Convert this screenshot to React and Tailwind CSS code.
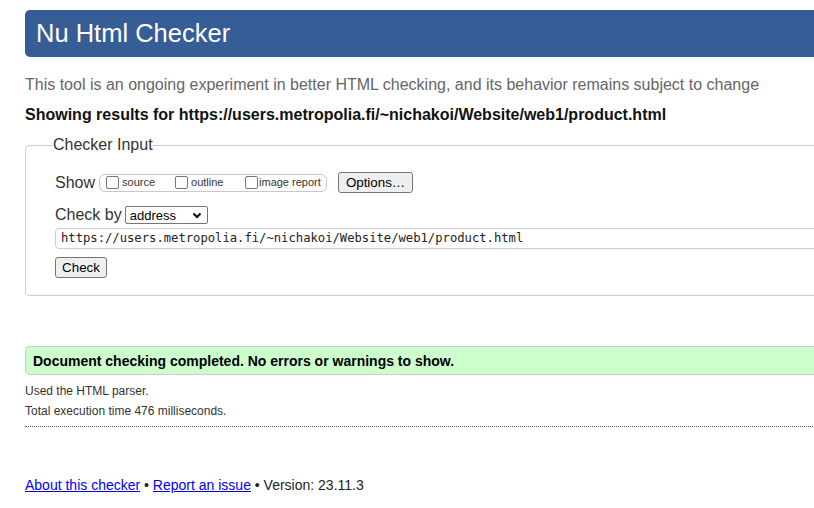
import React from 'react';

const checkBox = "appearance-none w-[13px] h-[13px] m-0 shrink-0 border border-[#767676] rounded-[2px] bg-white";
const greyButton = "flex items-center justify-center bg-[#efefef] border border-[#767676] rounded-[3px] text-[13.33px] text-black leading-none";

export default function App() {
    return (
        <div className="w-[814px] h-[508px] overflow-hidden bg-white font-['Liberation_Sans',Arial,sans-serif] text-[#222]">
            <div className="ml-[25px] w-[900px]">
                <header className="mt-[10px] h-[47px] flex items-center pl-[11px] bg-[#365d95] rounded-l-[5px]">
                    <h1 className="text-[25.5px] leading-none text-white">Nu Html Checker</h1>
                </header>

                <p className="mt-[19px] text-[16px] leading-[18px] text-[#666]">
                    This tool is an ongoing experiment in better HTML checking, and its behavior remains subject to change
                </p>
                <p className="mt-[12px] text-[16px] leading-[18px] font-bold text-[#111]">
                    Showing results for https://users.metropolia.fi/~nichakoi/Website/web1/product.html
                </p>

                <fieldset className="mt-[12px] border border-[#ccc] rounded-[4px] pl-[29px] pr-0 pb-[17px]">
                    <legend className="-ml-[2px] px-0 text-[16px] leading-[18px] text-[#333]">Checker Input</legend>

                    <div className="mt-[18px] h-[21px] flex items-center">
                        <span className="text-[16px] leading-none text-[#333]">Show</span>
                        <div className="ml-[4px] w-[228px] h-[18px] flex items-center border border-[#c8c8c8] rounded-[6px] text-[11px] text-[#333]">
                            <label className="w-[72px] flex items-center">
                                <input type="checkbox" className={`${checkBox} ml-[6px]`} />
                                <span className="ml-[3px]">source</span>
                            </label>
                            <label className="w-[70px] flex items-center">
                                <input type="checkbox" className={`${checkBox} ml-[3px]`} />
                                <span className="ml-[3px]">outline</span>
                            </label>
                            <label className="flex items-center">
                                <input type="checkbox" className={`${checkBox} ml-[3px]`} />
                                <span className="ml-[1px]">image report</span>
                            </label>
                        </div>
                        <button className={`${greyButton} ml-[11px] w-[75px] h-[21px]`}>Options…</button>
                    </div>

                    <div className="mt-[13px] h-[18px] flex items-center">
                        <span className="text-[16px] leading-none text-[#333]">Check by</span>
                        <div className="ml-[3px] w-[83px] h-[18px] flex items-center justify-between border border-[#767676] rounded-[2px] pl-[4px] pr-[4px] text-[13px] text-black">
                            <span className="leading-none">address</span>
                            <svg width="10" height="7" viewBox="0 0 10 7" className="mr-[1px]">
                                <path d="M1.5 1.5 L5 5 L8.5 1.5" fill="none" stroke="#000" strokeWidth="2" />
                            </svg>
                        </div>
                    </div>

                    <div className="mt-[4px] h-[21px] flex items-center border border-[#ccc] rounded-[4px] pl-[5px] font-['DejaVu_Sans_Mono',monospace] text-[12.2px] text-[#222]">
                        https://users.metropolia.fi/~nichakoi/Website/web1/product.html
                    </div>

                    <button className={`${greyButton} mt-[8px] w-[52px] h-[21px]`}>Check</button>
                </fieldset>

                <div className="mt-[50px] h-[29px] flex items-center pl-[7px] bg-[#ccffcc] border border-[#ccc] rounded-l-[4px]">
                    <p className="text-[14px] font-bold text-black leading-none">
                        Document checking completed. No errors or warnings to show.
                    </p>
                </div>

                <p className="mt-[9px] text-[12px] leading-[14px] text-[#333]">Used the HTML parser.</p>
                <p className="mt-[6px] text-[12px] leading-[14px] text-[#333]">Total execution time 476 milliseconds.</p>
                <div className="mt-[8px] border-t border-dotted border-[#555]" />

                <p className="mt-[50px] text-[14px] leading-[16px] text-[#222]">
                    <a href="#" className="text-[#0000ee] underline">About this checker</a>
                    {' • '}
                    <a href="#" className="text-[#0000ee] underline">Report an issue</a>
                    {' • Version: 23.11.3'}
                </p>
            </div>
        </div>
    );
}
